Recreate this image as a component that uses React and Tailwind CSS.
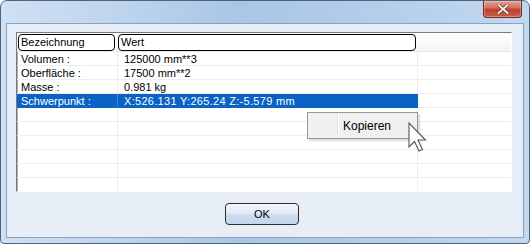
export default function App() {
  const rows = [
    { a: "Volumen :", b: "125000 mm**3" },
    { a: "Oberfläche :", b: "17500 mm**2" },
    { a: "Masse :", b: "0.981 kg" },
    { a: "Schwerpunkt :", b: "X:526.131 Y:265.24 Z:-5.579 mm", sel: true },
    { a: "", b: "" },
    { a: "", b: "" },
    { a: "", b: "" },
    { a: "", b: "" },
    { a: "", b: "" },
    { a: "", b: "" },
  ];
  return (
    <div className="relative w-[530px] h-[244px] overflow-hidden font-['Liberation_Sans',Arial,sans-serif] text-[11px] text-black">
      <div className="flex flex-col w-full h-full rounded-t-[7px] rounded-b-[4px] border border-[#51637a] bg-[linear-gradient(90deg,#cfe0f3_0%,#c0d6ee_20%,#a8c6e6_45%,#b3cdea_70%,#c3d8ef_100%)] px-[5px] pb-[5px]">
        {/* title bar */}
        <div className="h-[22px] flex justify-end items-start shrink-0">
          <div className="mr-[2px] w-[39px] h-[17px] rounded-b-[4px] border border-t-0 border-[#6b2a22] bg-[linear-gradient(180deg,#e7a091_0%,#d27463_40%,#bb3f2d_55%,#c9604a_100%)] flex items-center justify-center shadow-[inset_0_0_0_1px_rgba(255,255,255,0.3)]">
            <svg width="12" height="10" viewBox="0 0 12 10">
              <path d="M1.5 1 L10.5 9 M10.5 1 L1.5 9" stroke="#6e3028" strokeWidth="3.2" strokeLinecap="square" />
              <path d="M1.5 1 L10.5 9 M10.5 1 L1.5 9" stroke="#f4f4f4" strokeWidth="1.8" strokeLinecap="square" />
            </svg>
          </div>
        </div>
        {/* client */}
        <div className="flex-1 flex flex-col border border-[#8aa2bf] bg-[#e8eef8] pt-[8px] pl-[9px] pr-[11px]">
          <div className="h-[160px] shrink-0 flex flex-col border-t border-l border-[#7a7a7a] border-r border-b border-r-[#ffffff] border-b-[#ffffff] shadow-[inset_1px_1px_0_#a9a9a9] bg-white overflow-hidden">
            {/* header */}
            <div className="h-[19px] shrink-0 flex items-center pl-[1px] bg-[linear-gradient(180deg,#ffffff_0%,#f4f4f4_100%)] border-b border-[#e5e5e5]">
              <div className="w-[97px] h-[17px] bg-white border border-black rounded-[4px] pl-[2px] leading-[15px]">Bezeichnung</div>
              <div className="ml-[3px] w-[298px] h-[17px] bg-white border border-black rounded-[4px] pl-[2px] leading-[15px]">Wert</div>
            </div>
            {rows.map((r, i) => (
              <div key={i} className="h-[14px] shrink-0 flex leading-[14px]">
                <div className={`w-[101px] shrink-0 border-b border-r pl-[4px] whitespace-nowrap ${r.sel ? "bg-[#0a62c4] text-white border-[#0a62c4] border-r-[#3d82d0]" : "border-[#ededed]"}`}>{r.a}</div>
                <div className={`w-[300px] shrink-0 border-b border-r pl-[6px] whitespace-nowrap ${r.sel ? "bg-[#0a62c4] text-white border-[#0a62c4] tracking-[0.3px]" : "border-[#ededed]"}`}>{r.b}</div>
                <div className="flex-1 border-b border-[#ededed]"></div>
              </div>
            ))}
          </div>
          <div className="flex-1 flex items-center justify-center pr-[4px]">
            <div className="w-[74px] h-[22px] mt-[-1px] rounded-[4px] border border-[#2d2d2d] bg-[linear-gradient(180deg,#f2f6fc_0%,#e3ecf8_45%,#cddcf0_55%,#c4d6ee_100%)] flex items-center justify-center text-[11px]">OK</div>
          </div>
        </div>
      </div>
      {/* context menu */}
      <div className="absolute left-[307px] top-[112px] w-[111px] h-[27px] bg-[#f0f0f0] border border-[#979797] shadow-[2px_2px_2px_rgba(0,0,0,0.15)] flex items-center">
        <div className="ml-[29px] w-[1px] h-full bg-[#e0e0e0] border-r border-white box-content"></div>
        <div className="ml-[4px] text-[12px] leading-[14px]">Kopieren</div>
      </div>
      {/* cursor */}
      <svg className="absolute left-[408px] top-[122px]" width="19" height="30" viewBox="0 0 19 30">
        <path d="M1 1 L1 25 L6.5 19.5 L11 29 L14.5 27.5 L10 18 L17.5 18 Z" fill="#ffffff" stroke="#555555" strokeWidth="1.1" strokeLinejoin="miter" />
      </svg>
    </div>
  );
}
